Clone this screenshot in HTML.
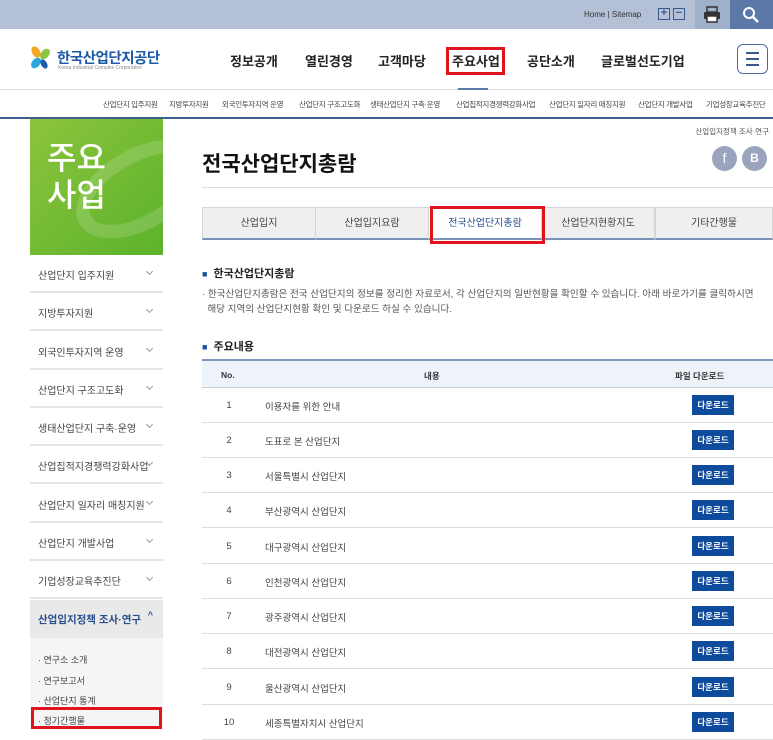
<!DOCTYPE html><html><head><meta charset="utf-8"><style>
*{margin:0;padding:0;box-sizing:border-box}
body{width:773px;height:725px;overflow:hidden;background:#fff;font-family:"Liberation Sans","Noto Sans CJK KR",sans-serif;color:#333;position:relative}
.a{position:absolute;white-space:nowrap}
.top{left:0;top:0;width:773px;height:29px;background:#b4c0d6}
.nav{font-size:13px;font-weight:bold;color:#222;top:51px}
.sub{font-size:7.5px;color:#444;top:99px;letter-spacing:-.3px}
.side{left:30px;width:133px;height:38px;border-bottom:2px solid #e5e5e5;font-size:10px;color:#444;padding:12px 0 0 8px}
.side:after{content:"";position:absolute;right:11px;top:14px;width:4px;height:4px;border-right:1px solid #999;border-bottom:1px solid #999;transform:rotate(45deg)}
.tab{top:207px;height:33px;width:114px;background:#efefef;border:1px solid #d5d5d5;border-bottom:2px solid #7a93b8;font-size:10px;color:#444;text-align:center;line-height:31px}
.row{left:202px;width:571px;height:35px;border-bottom:1px solid #dcdcdc;font-size:9.5px;color:#444}
.row .n{position:absolute;left:20px;width:14px;text-align:center;top:12px}
.row .t{position:absolute;left:63px;top:11px}
.row .b{position:absolute;left:490px;top:7px;width:42px;height:20px;background:#0f4b9c;color:#fff;font-size:8.5px;font-weight:bold;text-align:center;line-height:20px}
.sm{left:38px;font-size:9px;color:#444}
</style></head><body>
<div class="a top"></div>
<div class="a" style="left:584px;top:10px;font-size:8px;color:#333">Home&nbsp;|&nbsp;Sitemap</div>
<div class="a" style="left:658px;top:8px;width:12px;height:12px;border:1px solid #3b5b8b;font-size:11px;line-height:9px;text-align:center;color:#3b5b8b;font-weight:bold">+</div>
<div class="a" style="left:673px;top:8px;width:12px;height:12px;border:1px solid #3b5b8b;font-size:11px;line-height:9px;text-align:center;color:#3b5b8b;font-weight:bold">−</div>
<div class="a" style="left:695px;top:0;width:35px;height:29px;background:#9fb0cb"></div>
<svg class="a" style="left:703px;top:6px" width="18" height="17" viewBox="0 0 18 17"><rect x="4" y="1" width="10" height="5" fill="none" stroke="#333" stroke-width="1.5"/><rect x="1" y="6" width="16" height="7" rx="1" fill="#333"/><rect x="4" y="10" width="10" height="6" fill="#fff" stroke="#333" stroke-width="1.5"/></svg>
<div class="a" style="left:730px;top:0;width:43px;height:29px;background:#5a79a9"></div>
<svg class="a" style="left:742px;top:6px" width="18" height="18" viewBox="0 0 18 18"><circle cx="7" cy="7" r="5" fill="none" stroke="#fff" stroke-width="2"/><line x1="11" y1="11" x2="16" y2="16" stroke="#fff" stroke-width="2.5"/></svg>
<svg class="a" style="left:29px;top:45px" width="22" height="26" viewBox="0 0 22 26"><ellipse cx="7" cy="7" rx="4" ry="6" fill="#f5a623" transform="rotate(-30 7 7)"/><ellipse cx="16" cy="9" rx="4" ry="6" fill="#8cc63f" transform="rotate(40 16 9)"/><ellipse cx="7" cy="18" rx="4" ry="6" fill="#29a8e0" transform="rotate(40 7 18)"/><ellipse cx="15" cy="19" rx="3" ry="5" fill="#1e5ba8" transform="rotate(-30 15 19)"/></svg>
<div class="a" style="left:57px;top:47px;font-size:14.5px;font-weight:bold;color:#1c5aa8;letter-spacing:-.5px">한국산업단지공단</div>
<div class="a" style="left:58px;top:65px;font-size:5px;color:#888">Korea Industrial Complex Corporation</div>
<div class="a nav" style="left:230px">정보공개</div>
<div class="a nav" style="left:305px">열린경영</div>
<div class="a nav" style="left:378px">고객마당</div>
<div class="a nav" style="left:452px">주요사업</div>
<div class="a" style="left:446px;top:47px;width:59px;height:28px;border:3px solid #e0141e"></div>
<div class="a nav" style="left:527px">공단소개</div>
<div class="a nav" style="left:601px">글로벌선도기업</div>
<div class="a" style="left:737px;top:44px;width:31px;height:30px;border:1.5px solid #4a6a9a;border-radius:6px"></div>
<div class="a" style="left:746px;top:52px;width:13px;height:2px;background:#3b5b8b;box-shadow:0 6px 0 #3b5b8b,0 12px 0 #3b5b8b"></div>
<div class="a" style="left:0;top:89px;width:773px;height:1px;background:#ddd"></div>
<div class="a" style="left:458px;top:88px;width:30px;height:2px;background:#5a79a9"></div>
<div class="a sub" style="left:103px">산업단지 입주지원</div>
<div class="a sub" style="left:169px">지방투자지원</div>
<div class="a sub" style="left:222px">외국인투자지역 운영</div>
<div class="a sub" style="left:299px">산업단지 구조고도화</div>
<div class="a sub" style="left:370px">생태산업단지 구축·운영</div>
<div class="a sub" style="left:456px">산업집적지경쟁력강화사업</div>
<div class="a sub" style="left:549px">산업단지 일자리 매칭지원</div>
<div class="a sub" style="left:638px">산업단지 개발사업</div>
<div class="a sub" style="left:706px">기업성장교육추진단</div>
<div class="a" style="left:0;top:117px;width:773px;height:2px;background:#3e5e8e"></div>
<div class="a" style="left:30px;top:119px;width:133px;height:136px;background:linear-gradient(135deg,#8cc43c,#5cb22c);overflow:hidden"><div style="position:absolute;left:40px;top:30px;width:140px;height:80px;border:14px solid rgba(255,255,255,.15);border-radius:50%;transform:rotate(-30deg)"></div></div>
<div class="a" style="left:47px;top:140px;font-size:32px;color:#fff;line-height:37px;font-weight:500">주요<br>사업</div>
<div class="a side" style="top:255px">산업단지 입주지원</div>
<div class="a side" style="top:293px">지방투자지원</div>
<div class="a side" style="top:332px">외국인투자지역 운영</div>
<div class="a side" style="top:370px">산업단지 구조고도화</div>
<div class="a side" style="top:408px">생태산업단지 구축·운영</div>
<div class="a side" style="top:446px">산업집적지경쟁력강화사업</div>
<div class="a side" style="top:485px">산업단지 일자리 매칭지원</div>
<div class="a side" style="top:523px">산업단지 개발사업</div>
<div class="a side" style="top:561px">기업성장교육추진단</div>
<div class="a" style="left:30px;top:600px;width:133px;height:38px;background:#e9e9e9;font-size:10.5px;font-weight:bold;color:#2c4f8f;padding:12px 0 0 8px">산업입지정책 조사·연구 <span style="position:absolute;right:10px;top:10px;font-size:9px">^</span></div>
<div class="a" style="left:30px;top:638px;width:133px;height:90px;background:#f5f5f5"></div>
<div class="a sm" style="top:653px">· 연구소 소개</div>
<div class="a sm" style="top:674px">· 연구보고서</div>
<div class="a sm" style="top:694px">· 산업단지 통계</div>
<div class="a sm" style="top:714px">· 정기간행물</div>
<div class="a" style="left:31px;top:707px;width:131px;height:22px;border:3px solid #e0141e"></div>
<div class="a" style="right:4px;top:126px;font-size:7.5px;color:#555">산업입지정책 조사·연구</div>
<div class="a" style="left:712px;top:146px;width:25px;height:25px;border-radius:50%;background:#9aa5bd;color:#fff;font-size:14px;text-align:center;line-height:25px">f</div>
<div class="a" style="left:742px;top:146px;width:25px;height:25px;border-radius:50%;background:#9aa5bd;color:#fff;font-size:12px;text-align:center;line-height:25px;font-weight:bold">B</div>
<div class="a" style="left:202px;top:148px;font-size:21px;font-weight:bold;color:#111">전국산업단지총람</div>
<div class="a" style="left:202px;top:187px;width:571px;height:1px;background:#ddd"></div>
<div class="a tab" style="left:202px">산업입지</div>
<div class="a tab" style="left:315px">산업입지요람</div>
<div class="a tab" style="left:428px;background:#fff;color:#2c4f8f">전국산업단지총람</div>
<div class="a tab" style="left:541px">산업단지현황지도</div>
<div class="a tab" style="left:655px;width:118px">기타간행물</div>
<div class="a" style="left:430px;top:206px;width:115px;height:38px;border:3px solid #e0141e"></div>
<div class="a" style="left:202px;top:265px;font-size:11px;font-weight:bold;color:#222"><span style="color:#1c4f9c;font-size:9px">■</span>&nbsp; 한국산업단지총람</div>
<div class="a" style="left:202px;top:287px;font-size:9.6px;color:#555;line-height:15px">· 한국산업단지총람은 전국 산업단지의 정보를 정리한 자료로서, 각 산업단지의 일반현황을 확인할 수 있습니다. 아래 바로가기를 클릭하시면<br>&nbsp;&nbsp;해당 지역의 산업단지현황 확인 및 다운로드 하실 수 있습니다.</div>
<div class="a" style="left:202px;top:338px;font-size:11px;font-weight:bold;color:#222"><span style="color:#1c4f9c;font-size:9px">■</span>&nbsp; 주요내용</div>
<div class="a" style="left:202px;top:359px;width:571px;height:29px;background:#eef3fa;border-top:2px solid #7d97bd;border-bottom:1px solid #ccc;font-size:8.5px;font-weight:bold;color:#333"><span style="position:absolute;left:19px;top:9px">No.</span><span style="position:absolute;left:222px;top:9px">내용</span><span style="position:absolute;left:473px;top:9px">파일 다운로드</span></div>
<div class="a row" style="top:388px"><span class="n">1</span><span class="t">이용자를 위한 안내</span><span class="b">다운로드</span></div>
<div class="a row" style="top:423px"><span class="n">2</span><span class="t">도표로 본 산업단지</span><span class="b">다운로드</span></div>
<div class="a row" style="top:458px"><span class="n">3</span><span class="t">서울특별시 산업단지</span><span class="b">다운로드</span></div>
<div class="a row" style="top:493px"><span class="n">4</span><span class="t">부산광역시 산업단지</span><span class="b">다운로드</span></div>
<div class="a row" style="top:529px"><span class="n">5</span><span class="t">대구광역시 산업단지</span><span class="b">다운로드</span></div>
<div class="a row" style="top:564px"><span class="n">6</span><span class="t">인천광역시 산업단지</span><span class="b">다운로드</span></div>
<div class="a row" style="top:599px"><span class="n">7</span><span class="t">광주광역시 산업단지</span><span class="b">다운로드</span></div>
<div class="a row" style="top:634px"><span class="n">8</span><span class="t">대전광역시 산업단지</span><span class="b">다운로드</span></div>
<div class="a row" style="top:670px"><span class="n">9</span><span class="t">울산광역시 산업단지</span><span class="b">다운로드</span></div>
<div class="a row" style="top:705px"><span class="n">10</span><span class="t">세종특별자치시 산업단지</span><span class="b">다운로드</span></div>
</body></html>
